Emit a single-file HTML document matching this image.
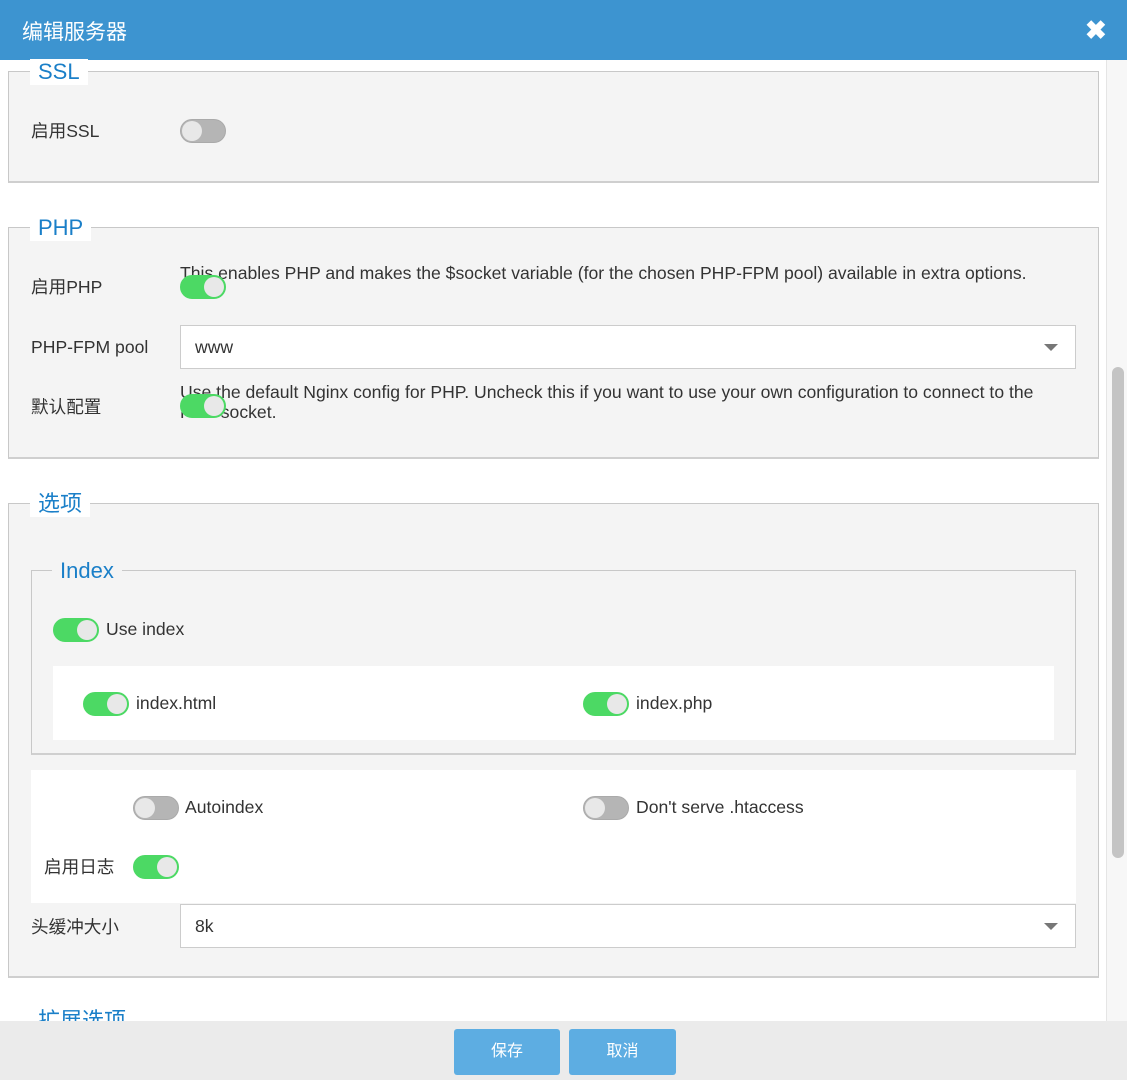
<!DOCTYPE html>
<html><head><meta charset="utf-8"><style>
*{box-sizing:border-box;margin:0;padding:0}
body{width:1127px;height:1080px;position:relative;overflow:hidden;background:#fff;font-family:"Liberation Sans","Noto Sans CJK SC",sans-serif;color:#333;font-size:17px}
.a{position:absolute}
.hdr{left:0;top:0;width:1127px;height:60px;background:#3d94d0;color:#fff;font-size:21px;padding:16px 0 0 22px}
.box{background:#f4f4f4;border:1px solid #c8c8c8;border-bottom:2px solid #cfcfcf}
.leg{background:#fff;color:#1a7fc8;font-size:22px;padding:0 8px;line-height:26px}
.legi{background:#f4f4f4}
.tg{width:46px;height:24px;border-radius:12px;background:#b5b5b5;border:1px solid #aaa}
.tg::after{content:"";position:absolute;top:1px;left:1px;width:20px;height:20px;border-radius:50%;background:#e8e8e8}
.on{background:#4cd964;border-color:#4cd964}
.on::after{left:23px}
.lbl{font-size:17.6px;color:#333;line-height:22px}
.sel{background:#fff;border:1px solid #ccc;padding:0 14px;line-height:42px;font-size:17.6px}
.sel::after{content:"";position:absolute;right:17px;top:18px;border-left:7px solid transparent;border-right:7px solid transparent;border-top:7px solid #777}
.wh{background:#fff}
.btn{background:#5dade2;color:#fff;border-radius:3px;text-align:center;line-height:45px;font-size:16px}
</style></head><body>
<div class="a hdr">编辑服务器</div>
<div class="a" style="left:1085px;top:15px;color:#fff;font-size:26px;font-weight:bold">✖</div>

<div class="a" style="left:1106px;top:60px;width:21px;height:961px;background:#f7f7f7;border-left:1px solid #e5e5e5"></div>
<div class="a" style="left:1112px;top:367px;width:12px;height:491px;background:#c4c4c4;border-radius:6px"></div>

<!-- SSL -->
<div class="a box" style="left:8px;top:71px;width:1091px;height:112px"></div>
<div class="a leg" style="left:30px;top:59px">SSL</div>
<div class="a lbl" style="left:31px;top:120px">启用SSL</div>
<div class="a tg" style="left:180px;top:119px"></div>

<!-- PHP -->
<div class="a box" style="left:8px;top:227px;width:1091px;height:232px"></div>
<div class="a leg" style="left:30px;top:215px">PHP</div>
<div class="a lbl" style="left:31px;top:276px">启用PHP</div>
<div class="a lbl" style="left:180px;top:262px;white-space:nowrap">This enables PHP and makes the $socket variable (for the chosen PHP-FPM pool) available in extra options.</div>
<div class="a tg on" style="left:180px;top:275px"></div>
<div class="a lbl" style="left:31px;top:336px">PHP-FPM pool</div>
<div class="a sel" style="left:180px;top:325px;width:896px;height:44px">www</div>
<div class="a lbl" style="left:31px;top:396px">默认配置</div>
<div class="a lbl" style="left:180px;top:382px;width:890px;line-height:20px">Use the default Nginx config for PHP. Uncheck this if you want to use your own configuration to connect to the PHP socket.</div>
<div class="a tg on" style="left:180px;top:394px"></div>

<!-- 选项 -->
<div class="a box" style="left:8px;top:503px;width:1091px;height:475px"></div>
<div class="a leg" style="left:30px;top:491px">选项</div>
<div class="a box" style="left:31px;top:570px;width:1045px;height:185px"></div>
<div class="a leg legi" style="left:52px;top:558px">Index</div>
<div class="a tg on" style="left:53px;top:618px"></div>
<div class="a lbl" style="left:106px;top:618px">Use index</div>
<div class="a wh" style="left:53px;top:666px;width:1001px;height:74px"></div>
<div class="a tg on" style="left:83px;top:692px"></div>
<div class="a lbl" style="left:136px;top:692px">index.html</div>
<div class="a tg on" style="left:583px;top:692px"></div>
<div class="a lbl" style="left:636px;top:692px">index.php</div>

<div class="a wh" style="left:31px;top:770px;width:1045px;height:133px"></div>
<div class="a tg" style="left:133px;top:796px"></div>
<div class="a lbl" style="left:185px;top:796px">Autoindex</div>
<div class="a tg" style="left:583px;top:796px"></div>
<div class="a lbl" style="left:636px;top:796px">Don't serve .htaccess</div>
<div class="a lbl" style="left:44px;top:856px">启用日志</div>
<div class="a tg on" style="left:133px;top:855px"></div>
<div class="a lbl" style="left:31px;top:916px">头缓冲大小</div>
<div class="a sel" style="left:180px;top:904px;width:896px;height:44px">8k</div>

<div class="a leg" style="left:30px;top:1008px">扩展选项</div>

<!-- footer -->
<div class="a" style="left:0;top:1021px;width:1127px;height:59px;background:#ebebeb"></div>
<div class="a btn" style="left:454px;top:1029px;width:106px;height:46px">保存</div>
<div class="a btn" style="left:569px;top:1029px;width:107px;height:46px">取消</div>
</body></html>
